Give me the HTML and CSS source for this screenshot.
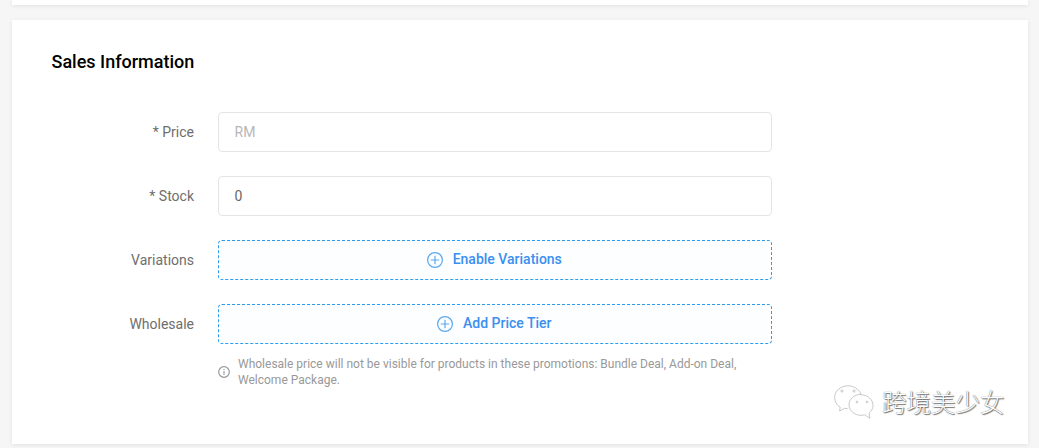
FILE: index.html
```html
<!DOCTYPE html>
<html lang="en">
<head>
<meta charset="utf-8">
<title>Sales Information</title>
<link rel="stylesheet" href="styles.css">
</head>
<body>
<div class="page">
  <div class="card card-top"></div>
  <section class="card card-sales">
    <h2 class="title">Sales Information</h2>
    <div class="form">
      <div class="row">
        <label class="label"><span class="req">*</span> Price</label>
        <div class="input placeholder">RM</div>
      </div>
      <div class="row">
        <label class="label"><span class="req">*</span> Stock</label>
        <div class="input">0</div>
      </div>
      <div class="row">
        <label class="label">Variations</label>
        <div class="dashed">
          <svg class="plus" width="16" height="16" viewBox="0 0 16 16"><circle cx="8" cy="8" r="7.4"/><path d="M8 3.800v8.400M3.800 8h8.400"/></svg>
          <span>Enable Variations</span>
        </div>
      </div>
      <div class="row">
        <label class="label">Wholesale</label>
        <div class="control">
          <div class="dashed">
            <svg class="plus" width="16" height="16" viewBox="0 0 16 16"><circle cx="8" cy="8" r="7.4"/><path d="M8 3.800v8.400M3.800 8h8.400"/></svg>
            <span>Add Price Tier</span>
          </div>
          <div class="note">
            <svg class="info" width="12" height="12" viewBox="0 0 12 12"><circle cx="6" cy="6" r="5.300"/><path d="M6 5.200v3.600M6 3v1.200"/></svg>
            <p>Wholesale price will not be visible for products in these promotions: Bundle Deal, Add-on Deal, Welcome Package.</p>
          </div>
        </div>
      </div>
    </div>
  </section>
</div>
<div class="watermark">
  <svg class="wechat" width="40" height="34" viewBox="0 0 40 34">
    <path d="M14 .8C6.600.8.6 6 .6 12.600c0 4 2.200 7.400 5.600 9.600l-.6 3.800 5-2.700c1 .2 2 .3 3 .3"/>
    <path d="M14 .8c6 0 11.200 3.600 13 8.500"/>
    <path d="M27 9.300c-6.600 0-12 4.700-12 10.500s5.400 10.500 12 10.500c1.300 0 2.500-.2 3.700-.5l5.300 3.500-1-5.200c2.500-2 4-4.800 4-7.800 0-5.800-5.400-10.500-12-10.500z"/>
    <circle cx="8" cy="6" r="1.100"/><circle cx="20" cy="6" r="1.100"/>
    <circle cx="23" cy="17" r=".9"/><circle cx="33" cy="17" r=".9"/>
  </svg>
  <span class="wm-text">跨境美少女</span>
</div>
</body>
</html>
```
FILE: styles.css
```css
* { box-sizing: border-box; }
html, body { margin: 0; padding: 0; }
body {
  width: 1039px;
  height: 448px;
  overflow: hidden;
  background: #f6f6f6;
  font-family: Roboto, "Noto Sans CJK SC", sans-serif;
  font-size: 14px;
  position: relative;
}
.page { padding: 0 11px 0 12px; }
.card {
  background: #fff;
  box-shadow: 0 1px 4px rgba(0, 0, 0, .09);
}
.card-top { height: 5px; margin-bottom: 15px; }
.card-sales { height: 424px; padding: 31px 40px 0; }
.title {
  margin: 0 0 40px -0.5px;
  font-size: 18px;
  line-height: 21px;
  font-weight: 500;
  color: #000;
}
.form { display: flex; flex-direction: column; gap: 24px; }
.row { display: flex; align-items: flex-start; }
.label {
  width: 142px;
  margin-right: 24px;
  height: 40px;
  line-height: 40px;
  text-align: right;
  color: #6e6e6e;
  flex: none;
}
.req { color: #6e6e6e; }
.input {
  width: 554px;
  height: 40px;
  border: 1px solid #e5e5e5;
  border-radius: 4px;
  padding: 0 15.500px;
  line-height: 38px;
  color: #666;
}
.placeholder { color: #b7b7b7; }
.control { width: 554px; }
.dashed {
  width: 554px;
  height: 40px;
  border: 1px dashed #2d9bf0;
  border-radius: 4px;
  background: #fcfeff;
  display: flex;
  align-items: center;
  justify-content: center;
  gap: 9.500px;
  color: #3a8ff0;
  font-weight: 500;
  padding: 0 1px 2px 0;
}
.plus { flex: none; fill: none; stroke: #5aa9ef; stroke-width: 1.2; margin-top: 2px; }
.note {
  display: flex;
  align-items: center;
  gap: 8px;
  margin-top: 12px;
  font-size: 12px;
  line-height: 16px;
  color: #999;
}
.note p { margin: 0; }
.info { flex: none; fill: none; stroke: #999; stroke-width: 1.2; }
.watermark {
  position: absolute;
  left: 834px;
  top: 385px;
  display: flex;
  align-items: center;
  gap: 8px;
}
.wechat { fill: none; stroke: #bbb; stroke-width: .8; width: 40px; height: 34px; }
.wm-text {
  font-family: "Noto Sans CJK SC", sans-serif;
  font-size: 24.500px;
  font-weight: 300;
  line-height: 34px;
  color: #fff;
  text-shadow: 0 0 1px #444, 1px 1px 1px #777;
}
```
